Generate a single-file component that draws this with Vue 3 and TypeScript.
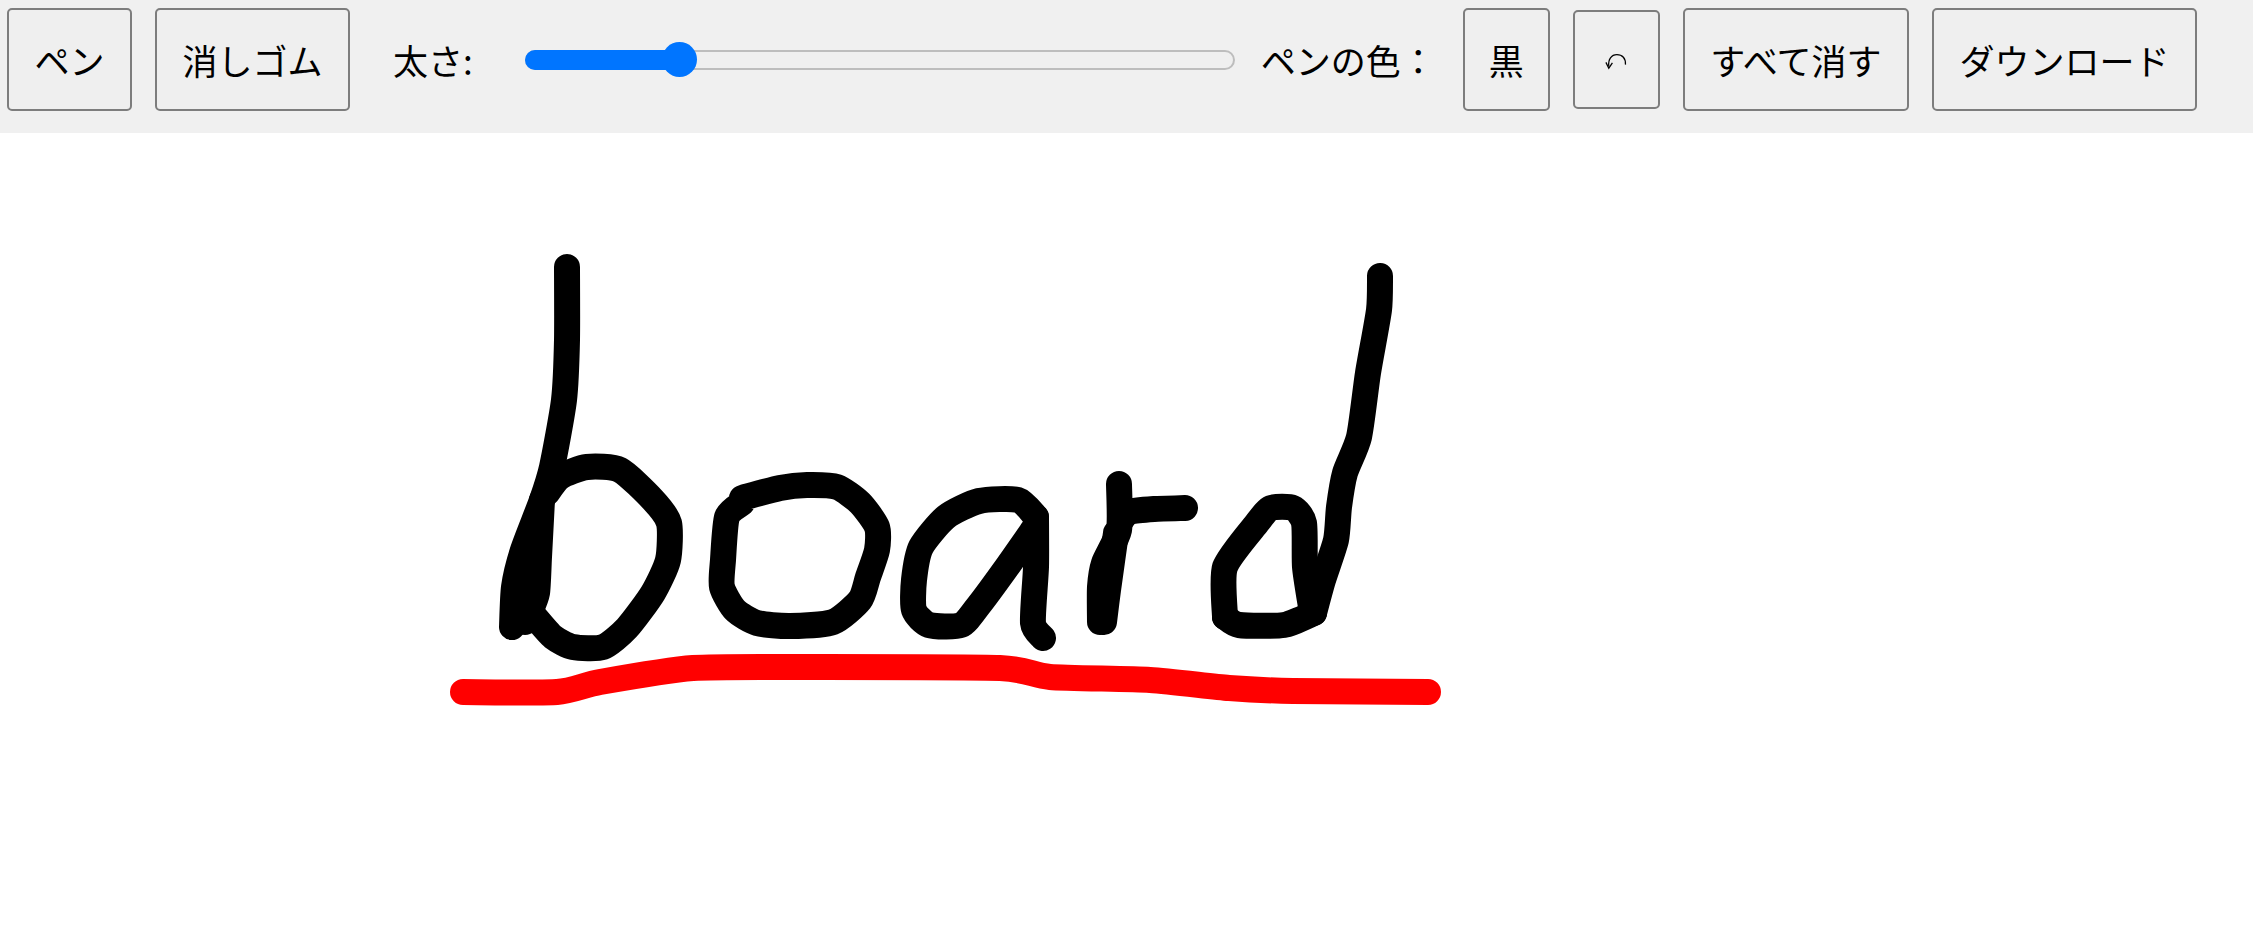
<script setup lang="ts">
import { ref, computed } from 'vue'

type Pt = [number, number]

const thickness = ref(21)
const ratio = computed(() => (thickness.value - 1) / 99)

function smooth(pts: Pt[]): string {
  const k = 9
  let d = `M${pts[0][0]} ${pts[0][1]}`
  for (let i = 0; i < pts.length - 1; i++) {
    const p0 = pts[Math.max(i - 1, 0)]
    const p1 = pts[i]
    const p2 = pts[i + 1]
    const p3 = pts[Math.min(i + 2, pts.length - 1)]
    const c1x = p1[0] + (p2[0] - p0[0]) / k
    const c1y = p1[1] + (p2[1] - p0[1]) / k
    const c2x = p2[0] - (p3[0] - p1[0]) / k
    const c2y = p2[1] - (p3[1] - p1[1]) / k
    d += ` C${c1x} ${c1y} ${c2x} ${c2y} ${p2[0]} ${p2[1]}`
  }
  return d
}

const black: Pt[][] = [
  [[567, 267], [567, 340], [564, 400], [552, 467], [542, 500], [523, 550], [514, 587], [512, 627]],
  [[542, 500], [539, 557], [537, 593], [530, 612]],
  [[536, 530], [525, 590], [525, 622]],
  [[535, 617], [553, 637], [573, 647], [603, 647], [627, 628], [653, 593], [668, 560], [669, 523], [653, 500], [620, 470], [587, 467], [560, 477], [547, 493]],
  [[742, 498], [780, 488], [807, 485], [837, 487], [860, 503], [877, 527], [877, 550], [868, 577], [860, 600], [833, 622], [790, 626], [757, 623], [735, 610], [722, 587], [723, 560], [727, 517], [742, 503]],
  [[1035, 527], [1007, 567], [979, 605], [961, 625], [929, 625], [914, 610], [914, 580], [921, 547], [946, 517], [979, 501], [1018, 500], [1036, 517]],
  [[1036, 517], [1036, 567], [1033, 623], [1043, 638]],
  [[1119, 484], [1119, 530], [1104, 563], [1100, 587], [1100, 622]],
  [[1104, 622], [1108, 590], [1116, 533]],
  [[1120, 522], [1129, 512], [1154, 509], [1185, 508]],
  [[1380, 276], [1379, 310], [1368, 373], [1359, 437], [1345, 473], [1339, 507], [1336, 540], [1323, 580], [1314, 613]],
  [[1314, 613], [1284, 625], [1239, 625], [1225, 617]],
  [[1225, 617], [1225, 567], [1257, 523], [1271, 508], [1293, 508], [1304, 523], [1305, 567], [1311, 607]],
]
const red: Pt[] = [[463, 692], [557, 692], [600, 682], [693, 668], [807, 667], [1000, 668], [1050, 677], [1150, 680], [1229, 688], [1293, 691], [1428, 692]]

const strokes = [
  { color: '#ff0000', d: smooth(red) },
  ...black.map((pts) => ({ color: '#000', d: smooth(pts) })),
]
</script>

<template>
  <div class="app">
    <div class="toolbar">
      <button class="btn" type="button">ペン</button>
      <button class="btn" type="button">消しゴム</button>
      <label class="label size-label" for="size">太さ:</label>
      <div class="slider-wrap" :style="{ '--ratio': ratio }">
        <input id="size" v-model.number="thickness" class="slider" type="range" min="1" max="100" />
      </div>
      <span class="label color-label">ペンの色：</span>
      <button class="btn square" type="button">黒</button>
      <button class="btn square undo" type="button" aria-label="元に戻す">
        <svg class="undo-icon" viewBox="0 0 24 20" width="22" height="18" fill="none" stroke="#000" stroke-width="1.4">
          <path d="M4 16 C3 8 7 3 13 3 C19 3 23 7 22.500 14" />
          <path d="M.8 11.500 L4 18 L8 12" />
        </svg>
      </button>
      <button class="btn" type="button">すべて消す</button>
      <button class="btn" type="button">ダウンロード</button>
    </div>
    <svg class="board" viewBox="0 133 2253 803" width="2253" height="803">
      <path
        v-for="(s, i) in strokes"
        :key="i"
        :d="s.d"
        :stroke="s.color"
        fill="none"
        stroke-width="26"
        stroke-linecap="round"
        stroke-linejoin="round"
      />
    </svg>
  </div>
</template>

<style>
html,
body {
  margin: 0;
  background: #fff;
  overflow: hidden;
}
</style>

<style scoped>
.app {
  display: flex;
  flex-direction: column;
  height: 936px;
  font-family: "Noto Sans CJK JP", "Liberation Sans", sans-serif;
  color: #000;
}
.toolbar {
  display: flex;
  align-items: center;
  gap: 23px;
  height: 133px;
  padding: 0 7px 14px;
  box-sizing: border-box;
  background: #f0f0f0;
}
.btn {
  height: 103px;
  padding: 0 25.500px;
  box-sizing: border-box;
  border: 2px solid #7d7d7d;
  border-radius: 5px;
  background: #efefef;
  color: #000;
  font: inherit;
  font-size: 35px;
  line-height: 1;
  white-space: nowrap;
}
.square {
  width: 87px;
  padding: 0;
}
.undo {
  height: 99px;
  display: flex;
  align-items: center;
  justify-content: center;
}
.undo-icon {
  margin-top: 2px;
}
.label {
  font-size: 35px;
  line-height: 1;
  white-space: nowrap;
}
.size-label {
  margin: 0 29px 0 20px;
}
.color-label {
  margin: 0 4px 0 3px;
}
.slider-wrap {
  position: relative;
  flex: none;
  width: 710px;
  height: 36px;
}
.slider-wrap::before {
  content: "";
  position: absolute;
  left: 0;
  top: 8px;
  height: 20px;
  width: calc(17.500px + (100% - 35px) * var(--ratio));
  border-radius: 10px 0 0 10px;
  background: #0075ff;
  pointer-events: none;
}
.slider {
  -webkit-appearance: none;
  appearance: none;
  display: block;
  width: 100%;
  height: 36px;
  margin: 0;
  background: transparent;
}
.slider::-webkit-slider-runnable-track {
  height: 20px;
  box-sizing: border-box;
  border: 2px solid #bdbdbd;
  border-radius: 10px;
  background: #efefef;
}
.slider::-webkit-slider-thumb {
  -webkit-appearance: none;
  width: 35px;
  height: 35px;
  margin-top: -9.500px;
  border: none;
  border-radius: 50%;
  background: #0075ff;
}
.board {
  display: block;
  flex: none;
  background: #fff;
}
</style>
